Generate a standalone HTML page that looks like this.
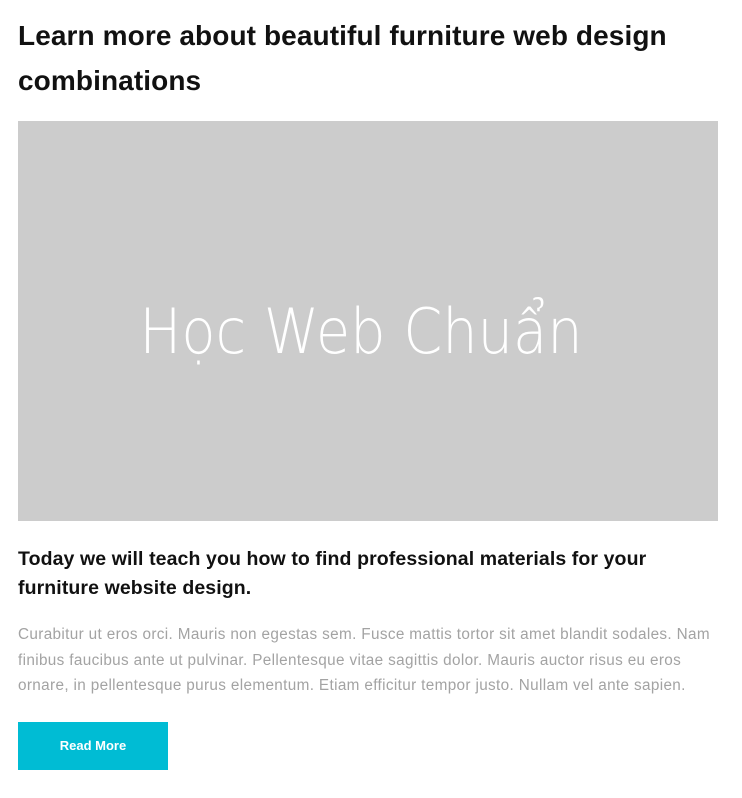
<!DOCTYPE html>
<html><head><meta charset="utf-8"><style>
body{margin:0;background:#fff;font-family:"Liberation Sans",sans-serif;}
.w{position:relative;width:742px;height:798px;}
h1{position:absolute;left:18px;top:13px;margin:0;width:710px;font-size:28px;line-height:45px;font-weight:bold;color:#111;letter-spacing:0.1px;}
.img{position:absolute;left:18px;top:121px;width:700px;height:400px;background:#cccccc;}
.img span{position:absolute;left:0;right:0;text-align:center;margin-left:-14px;font-family:"DejaVu Sans ExtraLight","DejaVu Sans","Liberation Sans",sans-serif;font-weight:200;font-size:62px;color:#fff;line-height:1;top:180px;transform:scaleX(.9);}
h2{position:absolute;left:18px;top:545px;margin:0;white-space:nowrap;font-size:19.5px;line-height:29px;font-weight:bold;color:#111;letter-spacing:0.1px;}
p{position:absolute;left:18px;top:622px;margin:0;white-space:nowrap;font-size:15.3px;line-height:25.5px;color:#a3a3a3;letter-spacing:0.35px;}
.btn{position:absolute;left:18px;top:722px;width:150px;height:48px;background:#00bcd4;color:#fff;font-weight:bold;font-size:13px;text-align:center;line-height:47px;}
</style></head><body><div class="w">
<h1>Learn more about beautiful furniture web design<br>combinations</h1>
<div class="img"><span>Học Web Chuẩn</span></div>
<h2>Today we will teach you how to find professional materials for your<br>furniture website design.</h2>
<p>Curabitur ut eros orci. Mauris non egestas sem. Fusce mattis tortor sit amet blandit sodales. Nam<br>finibus faucibus ante ut pulvinar. Pellentesque vitae sagittis dolor. Mauris auctor risus eu eros<br>ornare, in pellentesque purus elementum. Etiam efficitur tempor justo. Nullam vel ante sapien.</p>
<div class="btn">Read More</div>
</div></body></html>
